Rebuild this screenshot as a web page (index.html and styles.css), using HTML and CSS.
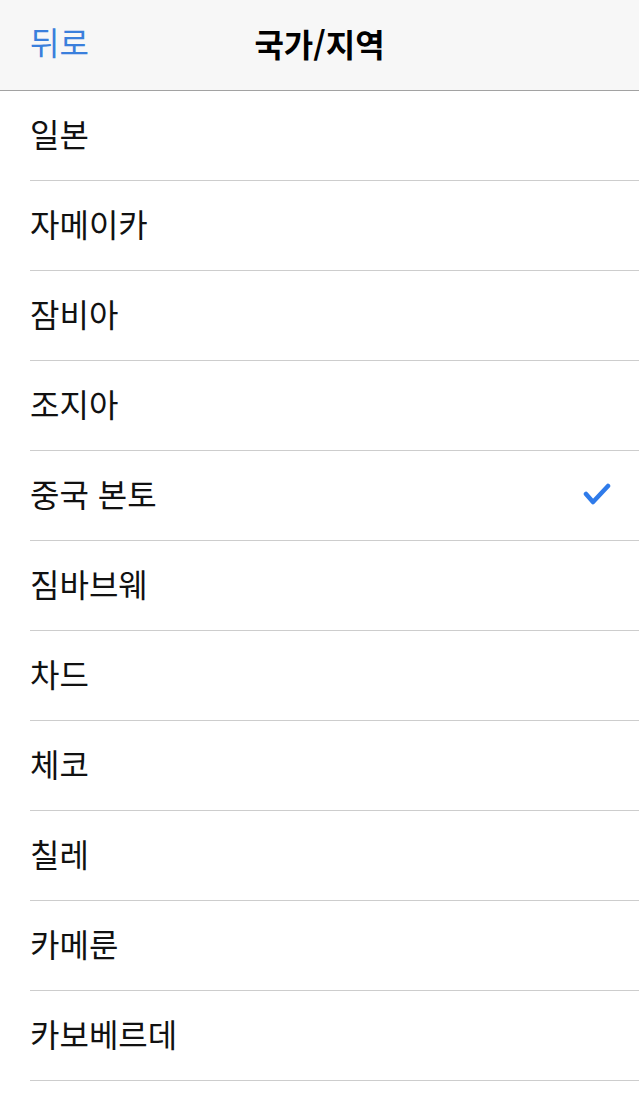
FILE: index.html
```html
<!DOCTYPE html>
<html lang="ko">
<head>
  <meta charset="UTF-8">
  <meta name="viewport" content="width=device-width, initial-scale=1.0">
  <title>국가/지역</title>
  <link rel="stylesheet" href="styles.css">
</head>
<body>
  <header class="navbar">
    <a class="back" href="#">뒤로</a>
    <h1>국가/지역</h1>
  </header>

  <ul class="lista">
    <li><div class="fila">일본</div></li>
    <li><div class="fila">자메이카</div></li>
    <li><div class="fila">잠비아</div></li>
    <li><div class="fila">조지아</div></li>
    <li class="activo">
      <div class="fila">
        <span>중국 본토</span>
        <svg class="check" width="28" height="24" viewBox="0 0 28 24">
          <path d="M3 11 L10 19 L25 3" fill="none" stroke="#2f7bea" stroke-width="4.5" stroke-linecap="round" stroke-linejoin="round"/>
        </svg>
      </div>
    </li>
    <li><div class="fila">짐바브웨</div></li>
    <li><div class="fila">차드</div></li>
    <li><div class="fila">체코</div></li>
    <li><div class="fila">칠레</div></li>
    <li><div class="fila">카메룬</div></li>
    <li><div class="fila">카보베르데</div></li>
  </ul>
</body>
</html>
```

FILE: styles.css
```css
* {
  box-sizing: border-box;
  margin: 0;
  padding: 0;
  font-family: "Noto Sans CJK KR", "Noto Sans", sans-serif;
}

body {
  background-color: #ffffff;
  color: #111111;
}

.navbar {
  position: relative;
  height: 91px;
  background-color: #f7f7f7;
  border-bottom: 1px solid #a2a2a2;
  display: flex;
  align-items: center;
  justify-content: center;
  padding-bottom: 4px;
}

.navbar h1 {
  font-size: 32px;
  font-weight: 700;
  color: #000;
  margin-left: 0;
}

.back {
  position: absolute;
  left: 30px;
  top: 18px;
  font-size: 32px;
  color: #3a7fdc;
  text-decoration: none;
}

.lista {
  list-style: none;
}

.lista li {
  padding-left: 30px;
}

.fila {
  height: 90px;
  border-bottom: 1px solid #cdcdcd;
  display: flex;
  align-items: center;
  justify-content: space-between;
  padding-right: 28px;
  font-size: 32px;
  padding-bottom: 6px;
}

.check {
  display: block;
  margin-top: 4px;
}
```
